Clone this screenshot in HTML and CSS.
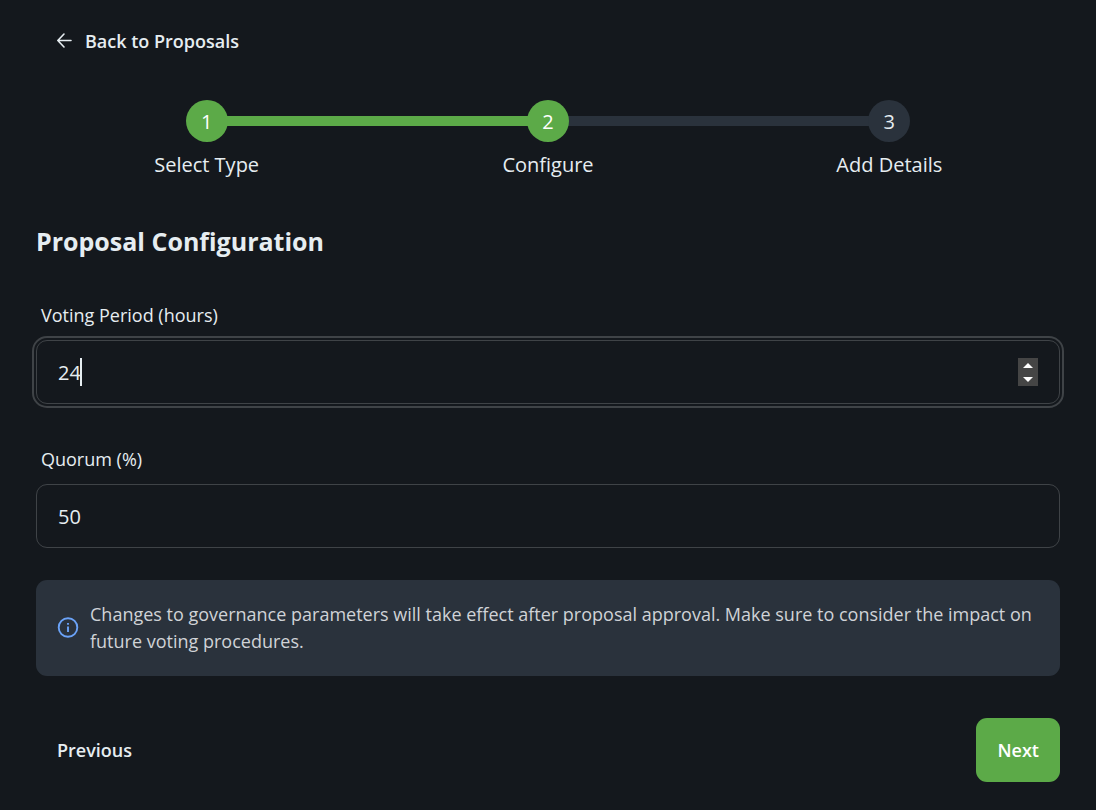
FILE: index.html
```
<!DOCTYPE html>
<html lang="en">
<head>
  <meta charset="UTF-8">
  <meta name="viewport" content="width=device-width, initial-scale=1">
  <title>New Proposal</title>
  <link rel="stylesheet" href="styles.css">
</head>
<body>

  <nav>
    <a class="btn" href="#proposals">
      <svg class="back-icon" viewBox="0 0 16 16" fill="none" stroke="currentColor" stroke-width="1.6" stroke-linecap="round" stroke-linejoin="round" aria-hidden="true">
        <path d="M14 7.5H0.8M7 1L0.8 7.5L7 14"/>
      </svg>
      Back to Proposals
    </a>
  </nav>

  <ol class="steps">
    <li class="step done"><span class="dot">1</span>Select Type</li>
    <li class="step done"><span class="dot">2</span>Configure</li>
    <li class="step"><span class="dot">3</span>Add Details</li>
  </ol>

  <form>
    <h1>Proposal Configuration</h1>

    <div class="field">
      <label for="votingPeriod">Voting Period (hours)</label>
      <div class="input-box">
        <input type="number" id="votingPeriod" value="24" min="1" autofocus>
        <div class="spinner">
          <button type="button" aria-label="Increase" onclick="votingPeriod.stepUp()"><svg viewBox="0 0 10 5" aria-hidden="true"><path d="M0 5L5 0L10 5Z"/></svg></button>
          <button type="button" aria-label="Decrease" onclick="votingPeriod.stepDown()"><svg viewBox="0 0 10 5" aria-hidden="true"><path d="M0 0L5 5L10 0Z"/></svg></button>
        </div>
      </div>
    </div>

    <div class="field">
      <label for="quorum">Quorum (%)</label>
      <div class="input-box">
        <input type="number" id="quorum" value="50" min="0" max="100">
      </div>
    </div>

    <div class="alert">
      <svg class="info-icon" viewBox="0 0 22 22" fill="none" stroke="currentColor" aria-hidden="true">
        <circle cx="11" cy="10.5" r="9.3" stroke-width="1.9"/>
        <path d="M11 9.5V15" stroke-width="1.9"/>
        <path d="M11 6V7.8" stroke-width="1.9"/>
      </svg>
      <p>Changes to governance parameters will take effect after proposal approval. Make sure to consider the impact on future voting procedures.</p>
    </div>

    <div class="actions">
      <button type="button" class="btn">Previous</button>
      <button type="submit" class="btn btn-primary">Next</button>
    </div>
  </form>

</body>
</html>
```
FILE: styles.css
```
* {
  box-sizing: border-box;
}
body {
  margin: 0;
  padding: 9px 36px 28px;
  background-color: #14181d;
  color: #e6edf1;
  font-family: "Segoe UI", "Open Sans", "Noto Sans", sans-serif;
  font-size: 20px;
}

/* Buttons */
.btn {
  display: inline-flex;
  align-items: center;
  gap: 12px;
  height: 64px;
  padding: 0 21px;
  border: none;
  border-radius: 11px;
  background: none;
  color: inherit;
  font-family: inherit;
  font-size: 18px;
  font-weight: 600;
  text-decoration: none;
  cursor: pointer;
}
.btn-primary {
  background-color: #5caa48;
  color: #fff;
}
.back-icon {
  width: 16px;
  height: 16px;
  overflow: visible;
}

/* Steps */
.steps {
  display: grid;
  grid-template-columns: repeat(3, 1fr);
  margin: 27px 0 0;
  padding: 0;
  list-style: none;
}
.step {
  display: grid;
  grid-template-rows: 42px 44px;
  justify-items: center;
  align-items: center;
}
.step::before {
  content: "";
  grid-area: 1 / 1;
  width: 100%;
  height: 10px;
  margin-left: -100%;
  background-color: #2a323c;
}
.step:first-child::before {
  content: none;
}
.step.done::before {
  background-color: #5caa48;
}
.dot {
  grid-area: 1 / 1;
  z-index: 1;
  display: grid;
  place-items: center;
  width: 42px;
  height: 42px;
  border-radius: 50%;
  background-color: #2a323c;
}
.done .dot {
  background-color: #5caa48;
  color: #fff;
}

/* Form */
h1 {
  margin: 37px 0 33px;
  font-size: 25px;
  line-height: 36px;
  font-weight: 700;
}
.field {
  margin-bottom: 32px;
}
.field label {
  display: block;
  padding: 10px 5px 12px;
  font-size: 18px;
  line-height: 26px;
}
.input-box {
  position: relative;
  display: flex;
  align-items: center;
  height: 64px;
  padding: 0 21px;
  border: 1px solid #3f4347;
  border-radius: 11px;
}
.input-box:focus-within {
  outline: 2px solid #3f4347;
  outline-offset: 2px;
}
.input-box input {
  flex: 1;
  min-width: 0;
  padding: 0;
  border: none;
  outline: none;
  background: none;
  color: inherit;
  caret-color: transparent;
  font: inherit;
  appearance: textfield;
}
.input-box input::-webkit-inner-spin-button {
  display: none;
}
/* Steady caret after a two digit value */
.input-box:focus-within::after {
  content: "";
  position: absolute;
  left: calc(20px + 2ch);
  width: 2px;
  height: 28px;
  background-color: #e6edf1;
}
.spinner {
  display: grid;
  width: 20px;
  height: 28px;
  background-color: #454545;
}
.spinner button {
  display: grid;
  place-items: center;
  padding: 0;
  border: none;
  background: none;
}
.spinner svg {
  width: 10px;
  height: 5px;
  fill: #fff;
}

/* Info message */
.alert {
  display: flex;
  align-items: center;
  gap: 11px;
  padding: 21px;
  border-radius: 11px;
  background-color: #2a323c;
  color: #d0d3d7;
  font-size: 18px;
  line-height: 27px;
}
.alert p {
  margin: 0;
}
.info-icon {
  flex: none;
  width: 22px;
  height: 22px;
  color: #6ba3f8;
}

.actions {
  display: flex;
  justify-content: space-between;
  margin-top: 42px;
}
```
